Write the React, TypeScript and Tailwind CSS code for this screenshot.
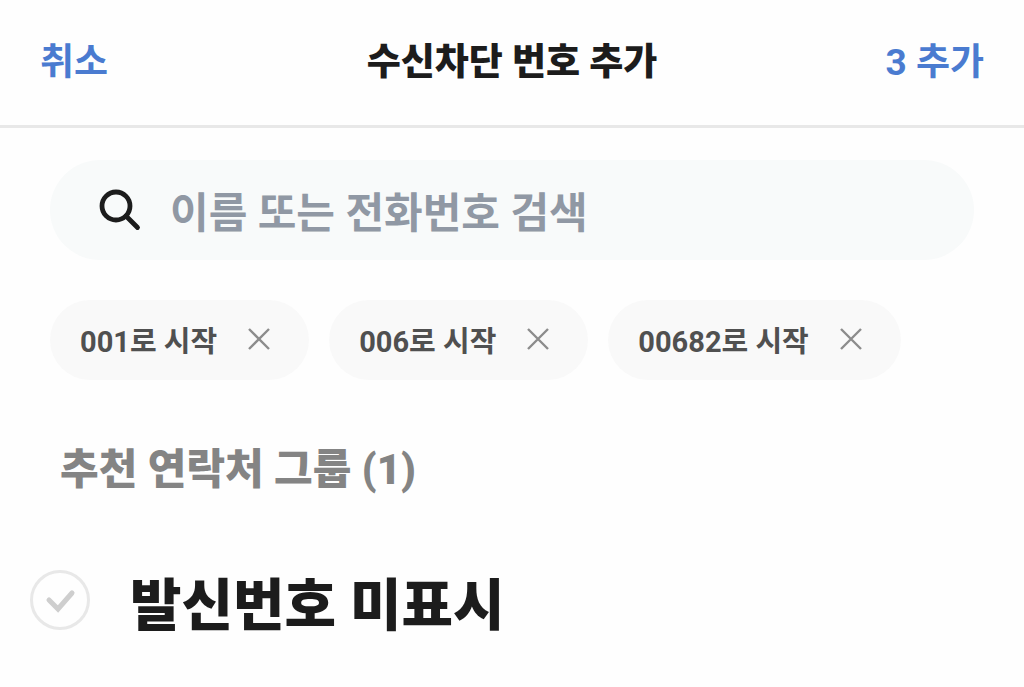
import React, { useState } from "react";

interface PrefixChipProps {
  label: string;
  onRemove: () => void;
}

const PrefixChip = ({ label, onRemove }: PrefixChipProps) => {
  return (
    <li className="flex h-20 items-center gap-[22px] rounded-full bg-[#f9f9f9] px-[30px]">
      <span className="pt-1 text-[29px] leading-10 font-bold whitespace-nowrap text-[#505050]">{label}</span>
      <button type="button" aria-label={`${label} 삭제`} onClick={onRemove} className="p-2 text-[#8c8c8c]">
        <svg width="24" height="24" viewBox="0 0 24 24" fill="none" stroke="currentColor" strokeWidth="2.4">
          <path d="M2 1l20 20M22 1l-20 20" />
        </svg>
      </button>
    </li>
  );
};

const App = () => {
  const [prefixes, setPrefixes] = useState(["001로 시작", "006로 시작", "00682로 시작"]);

  return (
    <div className="min-h-screen bg-[#fefefe] pb-10 font-['Roboto','Noto_Sans_CJK_KR',sans-serif]">
      {/* Header */}
      <header className="grid h-32 grid-cols-[1fr_auto_1fr] items-center border-b-3 border-[#e8e8e8] px-10 text-[37px] leading-[54px]">
        <button type="button" className="justify-self-start font-bold text-[#4a7bd0]">
          취소
        </button>
        <h1 className="font-black text-[#1c1c1c]">수신차단 번호 추가</h1>
        <button type="button" className="justify-self-end font-bold text-[#4a7bd0]">
          {prefixes.length} 추가
        </button>
      </header>

      <main>
        {/* Search */}
        <label className="mx-[50px] mt-8 flex h-[100px] items-center gap-7 rounded-full bg-[#f8fafa] px-12">
          <svg width="44" height="44" viewBox="0 0 44 44" fill="none" stroke="#1c1c1c" strokeWidth="4.8" className="shrink-0">
            <circle cx="18" cy="18" r="14" />
            <path d="M28 28l11.500 11.500" strokeLinecap="round" />
          </svg>
          <input
            type="search"
            aria-label="이름 또는 전화번호 검색"
            placeholder="이름 또는 전화번호 검색"
            className="min-w-0 flex-1 bg-transparent pt-2 text-[42px] leading-[60px] font-bold outline-none placeholder:text-[#9098a4]"
          />
        </label>

        {/* Selected prefixes */}
        <ul className="mt-10 flex flex-wrap gap-5 px-[50px]">
          {prefixes.map((prefix) => (
            <PrefixChip
              key={prefix}
              label={prefix}
              onRemove={() => setPrefixes(prefixes.filter((p) => p !== prefix))}
            />
          ))}
        </ul>

        {/* Recommended groups */}
        <section className="mt-[60px]">
          <h2 className="px-[60px] text-[42px] leading-[60px] font-black text-[#848484]">추천 연락처 그룹 (1)</h2>
          <label className="mt-[60px] flex items-center gap-10 px-[30px]">
            <span className="relative flex size-[60px] shrink-0">
              <input
                type="checkbox"
                className="peer size-full appearance-none rounded-full border-3 border-[#e8e8e8] checked:border-[#4a7bd0]"
              />
              <svg
                viewBox="0 0 60 60"
                fill="none"
                stroke="currentColor"
                strokeWidth="5"
                strokeLinecap="round"
                className="pointer-events-none absolute inset-0 text-[#cecece] peer-checked:text-[#4a7bd0]"
              >
                <path d="M19 30l9 9 14-16" />
              </svg>
            </span>
            <span className="pt-3 text-[56px] leading-[68px] font-black text-[#1c1c1c]">발신번호 미표시</span>
          </label>
        </section>
      </main>
    </div>
  );
};

export default App;
